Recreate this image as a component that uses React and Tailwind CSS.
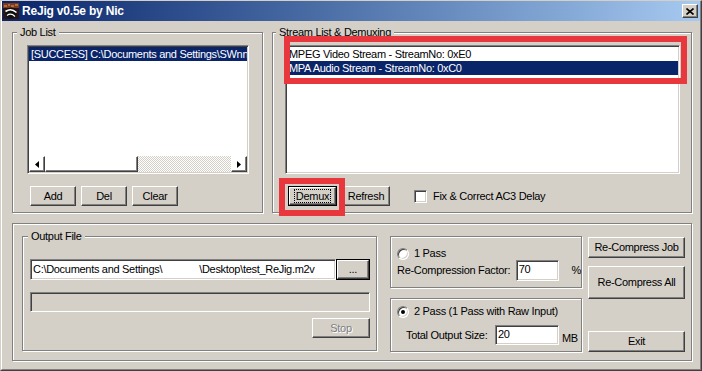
import React from 'react';

// classic 3d edges
const raised = 'border border-t-white border-l-white border-r-[#404040] border-b-[#404040] shadow-[inset_-1px_-1px_0_#808080]';
const sunken = 'border border-t-[#808080] border-l-[#808080] border-r-white border-b-white shadow-[inset_1px_1px_0_#404040,inset_-1px_-1px_0_#d4d0c8]';
const etched = 'border border-[#808080] shadow-[inset_1px_1px_0_#fff,1px_1px_0_#fff]';

const Btn = ({ className = '', children, isDefault = false, disabled = false }) => {
  if (isDefault) {
    return (
      <div className={`border border-black ${className}`}>
        <div className={`${raised} w-full h-full flex items-center justify-center`}>{children}</div>
      </div>
    );
  }
  return (
    <div className={`${raised} flex items-center justify-center ${disabled ? 'text-[#808080] [text-shadow:1px_1px_0_#fff]' : ''} ${className}`}>
      {children}
    </div>
  );
};

const Group = ({ label, className = '', legendClass = '', children }) => (
  <fieldset className={`${etched} ${className}`}>
    <legend className={`px-[2px] bg-[#d4d0c8] leading-[13px] ${legendClass}`}>{label}</legend>
    {children}
  </fieldset>
);

const Radio = ({ checked }) => (
  <div className="w-[12px] h-[12px] shrink-0 rounded-full bg-white border border-t-[#808080] border-l-[#808080] border-r-white border-b-white shadow-[inset_1px_1px_0_#404040,inset_-1px_-1px_0_#d4d0c8] flex items-center justify-center">
    {checked && <div className="w-[4px] h-[4px] rounded-full bg-black" />}
  </div>
);

const Arrow = ({ dir }) => (
  <div className={`${raised} w-[16px] h-[16px] shrink-0 flex items-center justify-center`}>
    <svg width="4" height="7" viewBox="0 0 4 7">
      {dir === 'left' ? <path d="M4 0V7L0 3.5Z" fill="#000" /> : <path d="M0 0V7L4 3.5Z" fill="#000" />}
    </svg>
  </div>
);

const AppIcon = () => (
  <svg width="16" height="16" viewBox="0 0 16 16">
    <rect width="16" height="16" fill="#2a1414" />
    <rect width="16" height="5" fill="#7a3a22" />
    <path d="M1 3h3M5 2h2M8 3h3M12 2h3" stroke="#f0a040" strokeWidth="1" />
    <circle cx="8" cy="10" r="5.5" fill="#101010" />
    <path d="M2.5 8.5Q8 4.5 13.5 9.5" stroke="#fff" strokeWidth="1.6" fill="none" />
    <path d="M4 12.5Q8 9.5 12 13.5" stroke="#fff" strokeWidth="1.2" fill="none" />
  </svg>
);

const App = () => {
  return (
    <div className="relative w-[702px] h-[371px] overflow-hidden bg-[#d4d0c8] border-t border-l border-r border-b border-t-[#d4d0c8] border-l-[#d4d0c8] border-r-[#404040] border-b-[#404040] font-['Liberation_Sans',Arial,sans-serif] text-[11px] leading-[13px] tracking-[-0.3px] text-black select-none">
      <div className="h-full flex flex-col border-l border-r border-b border-l-white border-r-[#808080] border-b-[#808080]">
        {/* title bar */}
        <div className="h-[20px] shrink-0 flex items-center bg-linear-to-r from-[#0a246a] to-[#a6caf0] pl-[1px] pr-[2px]">
          <AppIcon />
          <span className="ml-[3px] text-white font-bold text-[12px] tracking-[-0.2px]">ReJig v0.5e by Nic</span>
          <div className={`${raised} ml-auto w-[16px] h-[14px] bg-[#d4d0c8] flex items-center justify-center`}>
            <svg width="8" height="7" viewBox="0 0 8 7">
              <path d="M0.5 0.5L7.5 6.5M7.5 0.5L0.5 6.5" stroke="#000" strokeWidth="1.6" />
            </svg>
          </div>
        </div>

        {/* top row */}
        <div className="flex mt-[5px] ml-[10px]">
          <Group label="Job List" className="w-[251px] h-[187px]" legendClass="ml-[4px] px-[3px]">
            <div className={`${sunken} mt-[6px] ml-[14px] w-[222px] h-[129px] bg-white flex flex-col p-[1px]`}>
              <div className="h-[14px] leading-[14px] bg-[#0a246a] text-white px-[2px] whitespace-nowrap overflow-hidden">
                [SUCCESS] C:\Documents and Settings\SWnnnn\Desktop\test.vob
              </div>
              <div className="flex-1" />
              <div className="h-[16px] flex">
                <Arrow dir="left" />
                <div className={`${raised} w-[93px]`} />
                <div className="flex-1 bg-[repeating-conic-gradient(#ffffff_0_25%,#d4d0c8_0_50%)] bg-[length:2px_2px]" />
                <Arrow dir="right" />
              </div>
            </div>
            <div className="flex gap-[5px] mt-[12px] ml-[17px]">
              <Btn className="w-[46px] h-[20px]">Add</Btn>
              <Btn className="w-[46px] h-[20px]">Del</Btn>
              <Btn className="w-[46px] h-[20px]">Clear</Btn>
            </div>
          </Group>

          <Group label="Stream List & Demuxing" className="ml-[9px] w-[420px] h-[187px]" legendClass="ml-[3px] px-[3px]">
            <div className={`${sunken} mt-[6px] ml-[12px] w-[395px] h-[129px] bg-white flex flex-col p-[1px]`}>
              <div className="h-[14px] leading-[14px] px-[2px] whitespace-nowrap">MPEG Video Stream - StreamNo: 0xE0</div>
              <div className="h-[14px] leading-[14px] px-[2px] whitespace-nowrap bg-[#0a246a] text-white">MPA Audio Stream - StreamNo: 0xC0</div>
            </div>
            <div className="flex items-center mt-[12px] ml-[15px]">
              <Btn isDefault className="w-[49px] h-[20px]">
                <span className="outline-1 outline-dotted outline-black px-[1px] leading-[12px]">Demux</span>
              </Btn>
              <Btn className="ml-[5px] w-[48px] h-[20px]">Refresh</Btn>
              <div className={`${sunken} ml-[24px] w-[13px] h-[13px] bg-white`} />
              <span className="ml-[6px]">Fix &amp; Correct AC3 Delay</span>
            </div>
          </Group>
        </div>

        {/* bottom frame */}
        <div className={`${etched} mt-[10px] ml-[10px] w-[680px] h-[138px] flex pt-[6px] pl-[9px]`}>
          <Group label="Output File" className="w-[355px] h-[121px]" legendClass="ml-[5px] px-[3px]">
            <div className="flex mt-[16px] ml-[7px]">
              <div className={`${sunken} w-[306px] h-[21px] bg-white flex items-center pl-[2px] whitespace-nowrap overflow-hidden`}>
                <span>C:\Documents and Settings\</span>
                <span className="inline-block w-[37px]" />
                <span>\Desktop\test_ReJig.m2v</span>
              </div>
              <Btn isDefault className="w-[34px] h-[21px]">...</Btn>
            </div>
            <div className={`${sunken} mt-[12px] ml-[7px] w-[340px] h-[20px]`} />
            <Btn disabled className="mt-[6px] ml-[289px] w-[58px] h-[20px]">Stop</Btn>
          </Group>

          <div className="ml-[13px] mt-[6px] flex flex-col">
            <div className={`${etched} w-[192px] h-[52px] pt-[10px] pl-[6px]`}>
              <div className="flex items-center">
                <Radio />
                <span className="ml-[5px]">1 Pass</span>
              </div>
              <div className="flex items-center">
                <span className="w-[119px]">Re-Compression Factor:</span>
                <div className={`${sunken} w-[43px] h-[21px] bg-white pl-[2px] pt-[2px]`}>70</div>
                <span className="ml-[13px]">%</span>
              </div>
            </div>
            <div className={`${etched} mt-[10px] w-[192px] h-[54px] pt-[6px] pl-[6px]`}>
              <div className="flex items-center">
                <Radio checked />
                <span className="ml-[5px]">2 Pass (1 Pass with Raw Input)</span>
              </div>
              <div className="flex items-center mt-[7px]">
                <span className="w-[98px] pl-[9px]">Total Output Size:</span>
                <div className={`${sunken} w-[64px] h-[20px] bg-white pl-[2px] pt-[2px]`}>20</div>
                <span className="ml-[3px] mt-[6px]">MB</span>
              </div>
            </div>
          </div>

          <div className="ml-[6px] mt-[7px] flex flex-col">
            <Btn className="w-[97px] h-[21px]">Re-Compress Job</Btn>
            <Btn className="mt-[8px] w-[97px] h-[33px]">Re-Compress All</Btn>
            <Btn className="mt-[32px] w-[97px] h-[21px]">Exit</Btn>
          </div>
        </div>
      </div>

      {/* red annotation boxes */}
      <div className="absolute left-[283px] top-[35px] w-[403px] h-[48px] border-[6px] border-[#e8383d]" />
      <div className="absolute left-[278px] top-[177px] w-[66px] h-[38px] border-[6px] border-[#e8383d]" />
    </div>
  );
};

export default App;
